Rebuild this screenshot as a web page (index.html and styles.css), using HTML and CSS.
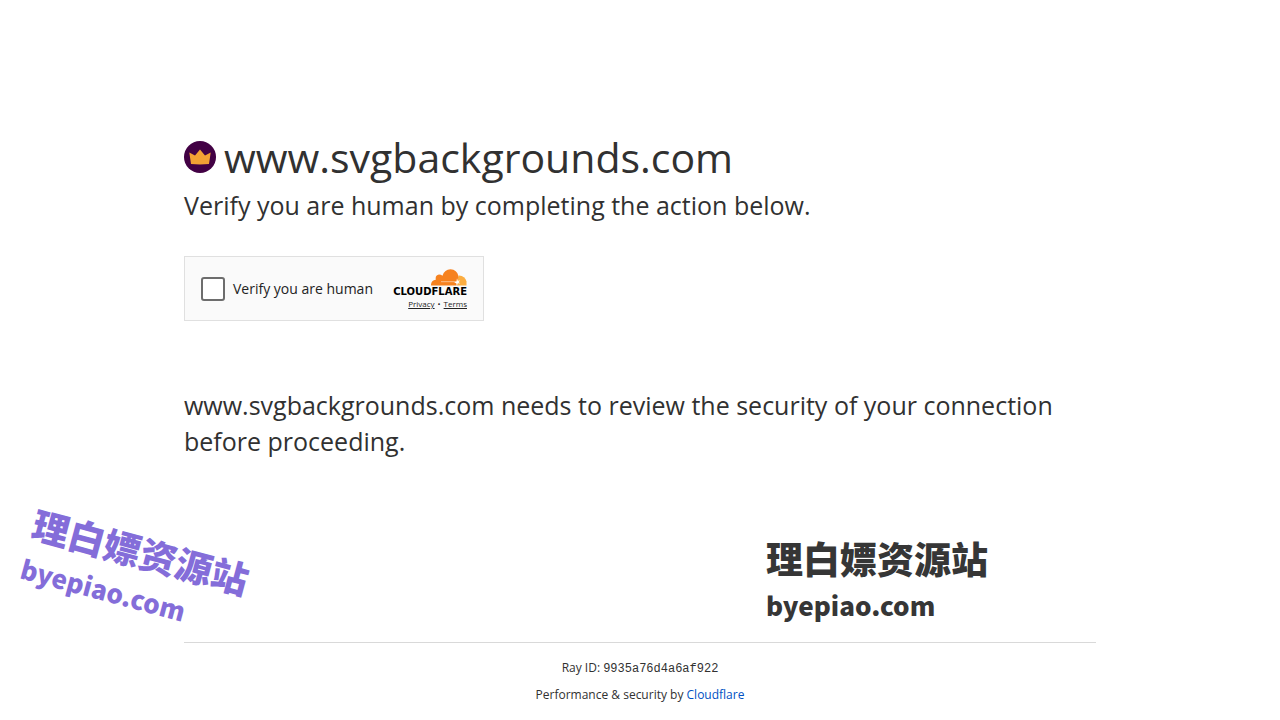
FILE: index.html
```html
<!DOCTYPE html>
<html lang="en">
<head>
<meta charset="utf-8">
<meta name="viewport" content="width=device-width, initial-scale=1">
<title>Just a moment...</title>
<link rel="stylesheet" href="styles.css">
</head>
<body>
<main class="main">
  <h1 class="site">
    <svg class="site-icon" viewBox="0 0 32 32" aria-hidden="true">
      <circle cx="16" cy="16" r="16" fill="#420144"/>
      <path d="M5.300 11.500 11 14.500 16 8.500l5 6 5.700-3-1.700 11.500q-9 .8-18 0z" fill="#f2a134"/>
    </svg>
    <span>www.svgbackgrounds.com</span>
  </h1>
  <p class="lead">Verify you are human by completing the action below.</p>
  <div class="widget">
    <label class="check"><input class="check-box" type="checkbox"><span>Verify you are human</span></label>
    <div class="brand">
      <svg class="cloud" viewBox="0 0 36 17" aria-hidden="true">
        <path d="M26 16.500V10l2-3.500q6 .3 7.500 6v4z" fill="#fbad41"/>
        <path d="M0 16.500q-.3-5 4.800-5.800Q4 6 8 5.500q2 0 3.500 1.300Q13.500.3 19.500.3 26 .8 27.500 7l-2 9.500z" fill="#f6821f"/>
        <path d="M10 12.700h15" stroke="#fff" stroke-width=".5" fill="none"/>
        <path d="m26 9.300.8 2.400 2.400-.3-1.600 1.600 1.600 1.600-2.400-.3-.8 2-.8-2-2-.9 2.300-1.200z" fill="#fff"/>
      </svg>
      <span class="wordmark">CLOUDFLARE</span>
      <div class="links"><a href="#privacy">Privacy</a><span>•</span><a href="#terms">Terms</a></div>
    </div>
  </div>
  <p class="lead">www.svgbackgrounds.com needs to review the security of your connection before proceeding.</p>
</main>
<footer class="footer">
  <div>Ray ID: <code class="ray">9935a76d4a6af922</code></div>
  <div>Performance &amp; security by <a class="footer-link" href="#cloudflare">Cloudflare</a></div>
</footer>
<div class="mark mark-left" lang="zh-CN"><div class="mark-name">理白嫖资源站</div><div class="mark-url">byepiao.com</div></div>
<div class="mark mark-right" lang="zh-CN"><div class="mark-name">理白嫖资源站</div><div class="mark-url">byepiao.com</div></div>
</body>
</html>
```
FILE: styles.css
```css
* { box-sizing: border-box; }
body {
  margin: 0;
  display: flex;
  flex-direction: column;
  min-height: 100vh;
  position: relative;
  background: #fff;
  color: #313131;
  font-family: "Open Sans", "Noto Sans", sans-serif;
}
.main, .footer { width: calc(100% - 48px); max-width: 912px; margin: 0 auto; }
.main { flex: 1; padding-top: 127px; }
.site { display: flex; align-items: center; gap: 8px; margin: 0; font-size: 41px; font-weight: 400; line-height: 60px; }
.site-icon { width: 32px; height: 32px; flex: none; }
.lead { margin: 0; font-size: 25px; line-height: 36px; }
.widget {
  display: flex;
  align-items: center;
  justify-content: space-between;
  width: 300px;
  height: 65px;
  margin: 33px 0 66px;
  padding: 0 16px;
  border: 1px solid #e0e0e0;
  background: #fafafa;
}
.check { display: flex; align-items: center; gap: 8px; color: #232323; font-size: 14px; line-height: 20px; white-space: nowrap; }
.check-box { appearance: none; width: 24px; height: 24px; margin: 0; border: 2px solid #6d6d6d; border-radius: 3px; background: #fff; }
.brand { display: flex; flex-direction: column; align-items: flex-end; padding-top: 2px; }
.cloud { width: 36px; height: 17px; }
.wordmark { font-family: "DejaVu Sans", sans-serif; font-size: 10px; font-weight: 700; line-height: 12px; color: #000; }
.links { display: flex; gap: 3px; font-size: 8px; line-height: 12px; color: #232323; }
.links a { color: #232323; text-underline-offset: 1px; }
.footer { padding: 16px 0; border-top: 1px solid #d9d9d9; text-align: center; font-size: 12px; line-height: 18px; }
.footer div + div { margin-top: 8px; }
.ray { font-family: "Liberation Mono", monospace; font-size: 12px; }
.footer-link { color: #0051c3; text-decoration: none; }
.mark {
  position: absolute;
  font-family: "Noto Sans CJK SC", sans-serif;
  font-weight: 900;
  white-space: nowrap;
}
.mark-name { font-size: 37px; line-height: 48px; }
.mark-url { font-size: 26px; line-height: 46px; }
.mark-left { left: 24px; top: 526px; color: #846dd9; transform: rotate(15deg); }
.mark-right { left: 766px; top: 534px; color: #363636; }
```
